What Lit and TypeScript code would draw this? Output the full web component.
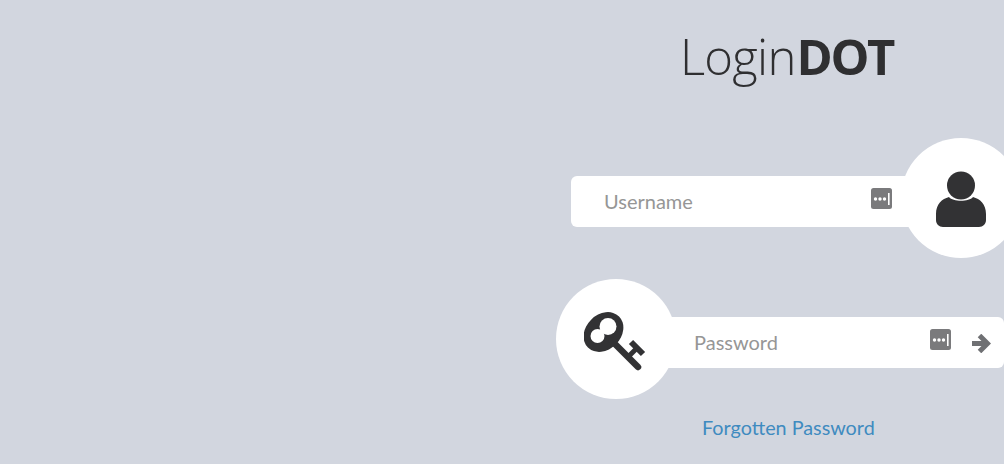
import { LitElement, html, css } from "lit";
import { customElement } from "lit/decorators.js";

const dots = html`<svg class="dots" viewBox="0 0 21 21" width="21" height="21"><rect width="21" height="21" rx="2.5" fill="#7a7a7c"/><circle cx="4.5" cy="11" r="1.7" fill="#fff"/><circle cx="9" cy="11" r="1.7" fill="#fff"/><circle cx="13.5" cy="11" r="1.7" fill="#fff"/><rect x="17" y="5" width="1.6" height="12" fill="#fff"/></svg>`;

@customElement("app-root")
export class AppRoot extends LitElement {
  static styles = css`
    :host { display: block; width: 1004px; height: 464px; overflow: hidden; background: #d2d6df; font-family: "Lato", sans-serif; }
    .panel { margin-left: 556px; width: 448px; display: flex; flex-direction: column; }
    .title { margin: 26px 0 0 124px; height: 112px; font: 300 49px/60px "Open Sans", sans-serif; color: #2f2f31; letter-spacing: -0.75px; white-space: nowrap; }
    .title b { font-weight: 700; letter-spacing: -2.4px; margin-left: 1px; }
    .row { display: flex; align-items: center; height: 120px; width: 520px; }
    .row + .row { margin-top: 21px; }
    .row.user { padding-left: 15px; }
    .bar { display: flex; align-items: center; height: 51px; margin-top: 6px; background: #fff; box-sizing: border-box; }
    .user .bar { width: 340px; border-radius: 6px 0 0 6px; padding: 0 19px 0 33px; margin-right: -10px; }
    .pass .bar { width: 338px; margin-left: -10px; padding: 0 0 0 28px; border-radius: 0 6px 6px 0; }
    input { flex: 1; min-width: 0; border: 0; outline: 0; background: transparent; padding: 0; font: 400 20px/26px "Lato", sans-serif; color: #333; margin-top: -1px; }
    input::placeholder { color: #969696; opacity: 1; }
    .dots { flex: none; margin: -6px 0 0 0; }
    .circle { flex: none; width: 120px; height: 120px; border-radius: 50%; background: #fff; display: flex; align-items: center; justify-content: center; position: relative; }
    .keyicon { margin: -1px 0 0 -1px; }
    .usericon { margin-top: 2px; }
    .arrow { flex: none; margin: 2px 13px 0 20px; }
    .link { margin: 14px 0 0 146px; font: 400 19.8px/28px "Lato", sans-serif; color: #3f8bc0; text-decoration: none; white-space: nowrap; }
  `;

  render() {
    return html`<div class="panel">
      <div class="title">Login<b>DOT</b></div>
      <div class="row user">
        <div class="bar">
          <input placeholder="Username" />
          ${dots}
        </div>
        <div class="circle">
          <svg class="usericon" viewBox="0 0 50 56" width="50" height="56">
            <circle cx="25" cy="14.5" r="14" fill="#323234"/>
            <path d="M13 26 C17 31 33 31 37 26 C44 28 50 33 50 43 L50 49 C50 53 47 56 43 56 L7 56 C3 56 0 53 0 49 L0 43 C0 33 6 28 13 26Z" fill="#323234"/>
          </svg>
        </div>
      </div>
      <div class="row pass">
        <div class="circle">
          <svg class="keyicon" viewBox="0 0 64 64" width="64" height="64">
            <ellipse cx="19.5" cy="25" rx="22" ry="17.5" transform="rotate(-45 19.5 25)" fill="#323234"/>
            <circle cx="24" cy="19.5" r="8.5" fill="#fff"/>
            <circle cx="13.5" cy="29" r="7" fill="#fff"/>
            <path d="M28 34 L54 60" stroke="#323234" stroke-width="6.5" stroke-linecap="round" fill="none"/>
            <path d="M47 35 L59 47" stroke="#323234" stroke-width="6" fill="none"/>
            <path d="M52 42 L44 50" stroke="#323234" stroke-width="5" fill="none"/>
          </svg>
        </div>
        <div class="bar">
          <input placeholder="Password" type="password" />
          ${dots}
          <svg class="arrow" viewBox="0 0 20 19" width="20" height="19"><path d="M1 9.5 H15 M8.5 1.5 L16.5 9.5 L8.5 17.5" fill="none" stroke="#6f7073" stroke-width="5"/></svg>
        </div>
      </div>
      <a class="link" href="#">Forgotten Password</a>
    </div>`;
  }
}
